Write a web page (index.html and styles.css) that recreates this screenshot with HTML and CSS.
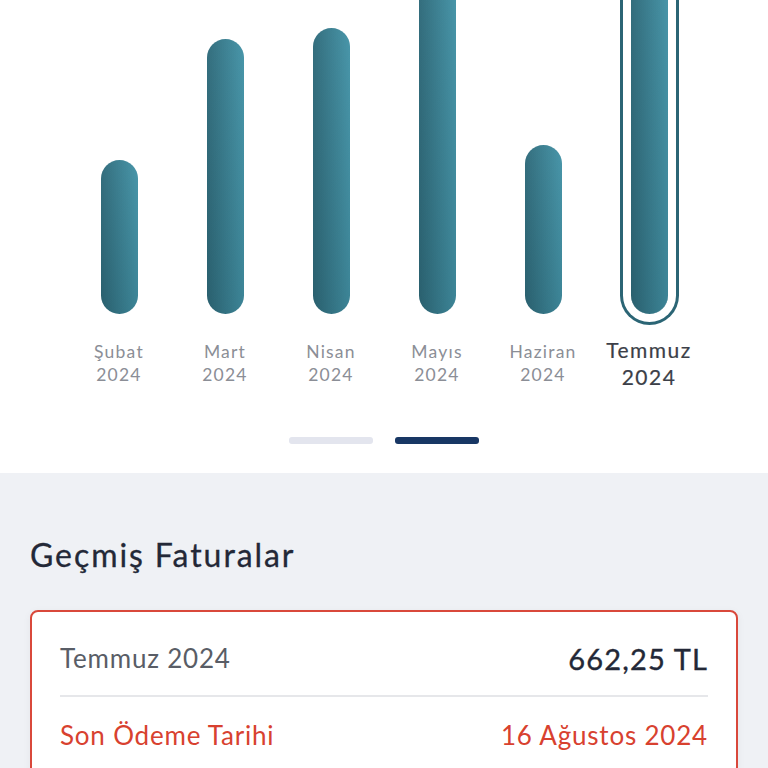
FILE: index.html
```html
<!DOCTYPE html>
<html lang="tr">
<head>
  <meta charset="UTF-8" />
  <meta name="viewport" content="width=device-width, initial-scale=1.0" />
  <title>Faturalar</title>
  <link rel="stylesheet" href="styles.css">
</head>
<body>
  <section class="usage">
    <div class="chart">
      <div class="month">
        <div class="bar-area"><div class="bar" style="height: 154px"></div></div>
        <div class="label">Şubat<br>2024</div>
      </div>
      <div class="month">
        <div class="bar-area"><div class="bar" style="height: 275px"></div></div>
        <div class="label">Mart<br>2024</div>
      </div>
      <div class="month">
        <div class="bar-area"><div class="bar" style="height: 286px"></div></div>
        <div class="label">Nisan<br>2024</div>
      </div>
      <div class="month">
        <div class="bar-area"><div class="bar" style="height: 340px"></div></div>
        <div class="label">Mayıs<br>2024</div>
      </div>
      <div class="month">
        <div class="bar-area"><div class="bar" style="height: 169px"></div></div>
        <div class="label">Haziran<br>2024</div>
      </div>
      <div class="month active">
        <div class="bar-area"><div class="bar" style="height: 350px"></div></div>
        <div class="label">Temmuz<br>2024</div>
      </div>
    </div>
    <div class="pager">
      <span></span>
      <span class="current"></span>
    </div>
  </section>

  <section class="history">
    <h2>Geçmiş Faturalar</h2>
    <div class="bill-card">
      <div class="bill-row">
        <span class="bill-month">Temmuz 2024</span>
        <span class="bill-amount">662,25 TL</span>
      </div>
      <div class="bill-row due">
        <span>Son Ödeme Tarihi</span>
        <span>16 Ağustos 2024</span>
      </div>
    </div>
  </section>
</body>
</html>
```

FILE: styles.css
```css
* {
  margin: 0;
  padding: 0;
  box-sizing: border-box;
}
html, body {
  height: 100%;
  overflow: hidden;
}
body {
  font-family: Lato, "Noto Sans", sans-serif;
  background-color: #eff1f5;
  color: #232837;
  letter-spacing: 0.05em;
}
.usage {
  background: #fff;
  padding-bottom: 29px;
}
.chart {
  display: flex;
  padding: 0 66px;
}
.month {
  flex: 1;
  display: flex;
  flex-direction: column;
  align-items: center;
}
.bar-area {
  height: 314px;
  display: flex;
  align-items: flex-end;
}
.bar {
  width: 37px;
  border-radius: 19px;
  background:
    linear-gradient(to bottom, rgba(255, 255, 255, 0.03), rgba(0, 0, 0, 0.1)),
    linear-gradient(to right, #2e6a7a, #4393a7);
}
.month.active .bar {
  box-shadow: 0 0 0 8px #fff, 0 0 0 11px #2b6575;
}
.label {
  margin-top: 26px;
  font-size: 17.5px;
  line-height: 23px;
  color: #8b8e96;
  text-align: center;
  letter-spacing: 0.07em;
}
.month.active .label {
  margin-top: 22px;
  font-size: 21px;
  line-height: 27px;
  font-weight: 400;
  color: #3c3f48;
  -webkit-text-stroke: 0.2px #3c3f48;
}
.pager {
  display: flex;
  justify-content: center;
  gap: 22px;
  margin-top: 47px;
}
.pager span {
  width: 84px;
  height: 7px;
  border-radius: 3px;
  background: #e3e5ee;
}
.pager span.current {
  background: #183764;
}
.history {
  padding: 62px 30px 0;
}
.history h2 {
  font-size: 32px;
  line-height: 40px;
  font-weight: 400;
  letter-spacing: 0.06em;
  color: #232837;
  -webkit-text-stroke: 0.3px #232837;
}
.bill-card {
  margin-top: 35px;
  background: #fff;
  border: 2px solid #d9483b;
  border-radius: 8px;
  padding: 0 28px;
  box-shadow: 0 2px 8px rgba(0, 0, 0, 0.05);
}
.bill-row {
  display: flex;
  justify-content: space-between;
  align-items: center;
  height: 85px;
  padding-top: 9px;
  border-bottom: 2px solid #e6e7ea;
}
.bill-month {
  font-size: 26px;
  color: #595d66;
}
.bill-amount {
  font-size: 29px;
  font-weight: 400;
  letter-spacing: 0.04em;
  color: #232837;
  -webkit-text-stroke: 0.35px #232837;
}
.bill-row.due {
  height: 76px;
  padding-top: 0;
  border-bottom: none;
  font-size: 26px;
  color: #d8412f;
}
```
